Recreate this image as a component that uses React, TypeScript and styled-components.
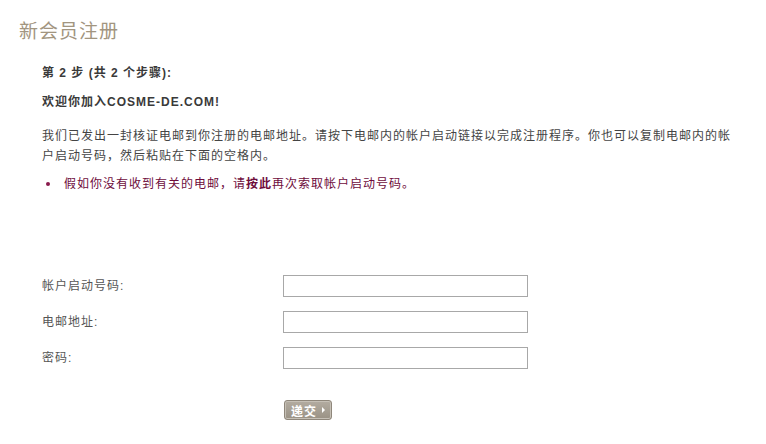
import React from 'react';
import styled, { createGlobalStyle } from 'styled-components';

const GlobalStyle = createGlobalStyle`
    body {
        margin: 0;
        background: #ffffff;
        font-family: "Liberation Sans", "Noto Sans CJK SC", sans-serif;
    }
`;

const Page = styled.div`
    width: 766px;
    height: 444px;
    padding: 20px 0 0 19px;
    box-sizing: border-box;
`;

const Title = styled.h1`
    margin: 0;
    font-size: 19px;
    line-height: 24px;
    font-weight: 400;
    letter-spacing: 1px;
    color: #a29580;
`;

const Content = styled.div`
    padding-left: 23px;
    width: 700px;
`;

const StepHeading = styled.div<{ $gap: number }>`
    margin-top: ${({ $gap }) => $gap}px;
    font-size: 12px;
    line-height: 18px;
    font-weight: 700;
    letter-spacing: 1px;
    color: #3a3a3a;
`;

const Paragraph = styled.p`
    margin: 15px 0 0;
    width: 694px;
    font-size: 12px;
    line-height: 20px;
    letter-spacing: 1px;
    color: #444444;
`;

const Bullet = styled.div`
    display: flex;
    align-items: center;
    gap: 14px;
    margin-top: 8px;
    padding-left: 4px;
    font-size: 12px;
    line-height: 20px;
    letter-spacing: 1px;
    color: #6e0c3c;
`;

const Dot = styled.span`
    flex-shrink: 0;
    width: 4px;
    height: 4px;
    border-radius: 50%;
    background: #8a1a4c;
`;

const Link = styled.a`
    color: #6e0c3c;
    font-weight: 700;
    text-decoration: none;
`;

const Form = styled.form`
    margin-top: 81px;
    display: flex;
    flex-direction: column;
    gap: 14px;
`;

const Row = styled.div`
    display: grid;
    grid-template-columns: 241px 245px;
    align-items: center;
    height: 22px;
`;

const Label = styled.label`
    font-size: 12px;
    line-height: 22px;
    letter-spacing: 1px;
    color: #555555;
`;

const Input = styled.input`
    width: 245px;
    height: 22px;
    box-sizing: border-box;
    border: 1px solid #a8a8a8;
    padding: 2px 4px;
    margin: 0;
    font-size: 12px;
`;

const Actions = styled.div`
    display: flex;
    margin-top: 31px;
    padding-left: 242px;
`;

const SubmitButton = styled.button`
    display: inline-flex;
    align-items: center;
    gap: 5px;
    height: 20px;
    width: 48px;
    padding: 0 0 0 6px;
    box-sizing: border-box;
    border: 1px solid #8f877b;
    border-radius: 3px;
    background: linear-gradient(#b3aca1, #9a9285);
    box-shadow: inset 0 0 0 1px #c6c0b6;
    color: #ffffff;
    font-family: "Noto Sans CJK SC", sans-serif;
    font-size: 12px;
    font-weight: 700;
    letter-spacing: 1px;
    cursor: pointer;
`;

const Arrow = styled.span`
    width: 0;
    height: 0;
    border-top: 3px solid transparent;
    border-bottom: 3px solid transparent;
    border-left: 3px solid #ffffff;
`;

const fields = [
    { id: 'code', label: '帐户启动号码:', type: 'text' },
    { id: 'email', label: '电邮地址:', type: 'text' },
    { id: 'password', label: '密码:', type: 'password' }
];

const App: React.FC = () => (
    <>
        <GlobalStyle />
        <Page>
            <Title>新会员注册</Title>
            <Content>
                <StepHeading $gap={20}>第 2 步 (共 2 个步骤):</StepHeading>
                <StepHeading $gap={11}>欢迎你加入COSME-DE.COM!</StepHeading>
                <Paragraph>
                    我们已发出一封核证电邮到你注册的电邮地址。请按下电邮内的帐户启动链接以完成注册程序。你也可以复制电邮内的帐户启动号码，然后粘贴在下面的空格内。
                </Paragraph>
                <Bullet>
                    <Dot />
                    <span>
                        假如你没有收到有关的电邮，请<Link href="#">按此</Link>再次索取帐户启动号码。
                    </span>
                </Bullet>
                <Form onSubmit={e => e.preventDefault()}>
                    {fields.map(f => (
                        <Row key={f.id}>
                            <Label htmlFor={f.id}>{f.label}</Label>
                            <Input id={f.id} type={f.type} />
                        </Row>
                    ))}
                </Form>
                <Actions>
                    <SubmitButton type="button">
                        递交
                        <Arrow />
                    </SubmitButton>
                </Actions>
            </Content>
        </Page>
    </>
);

export default App;
